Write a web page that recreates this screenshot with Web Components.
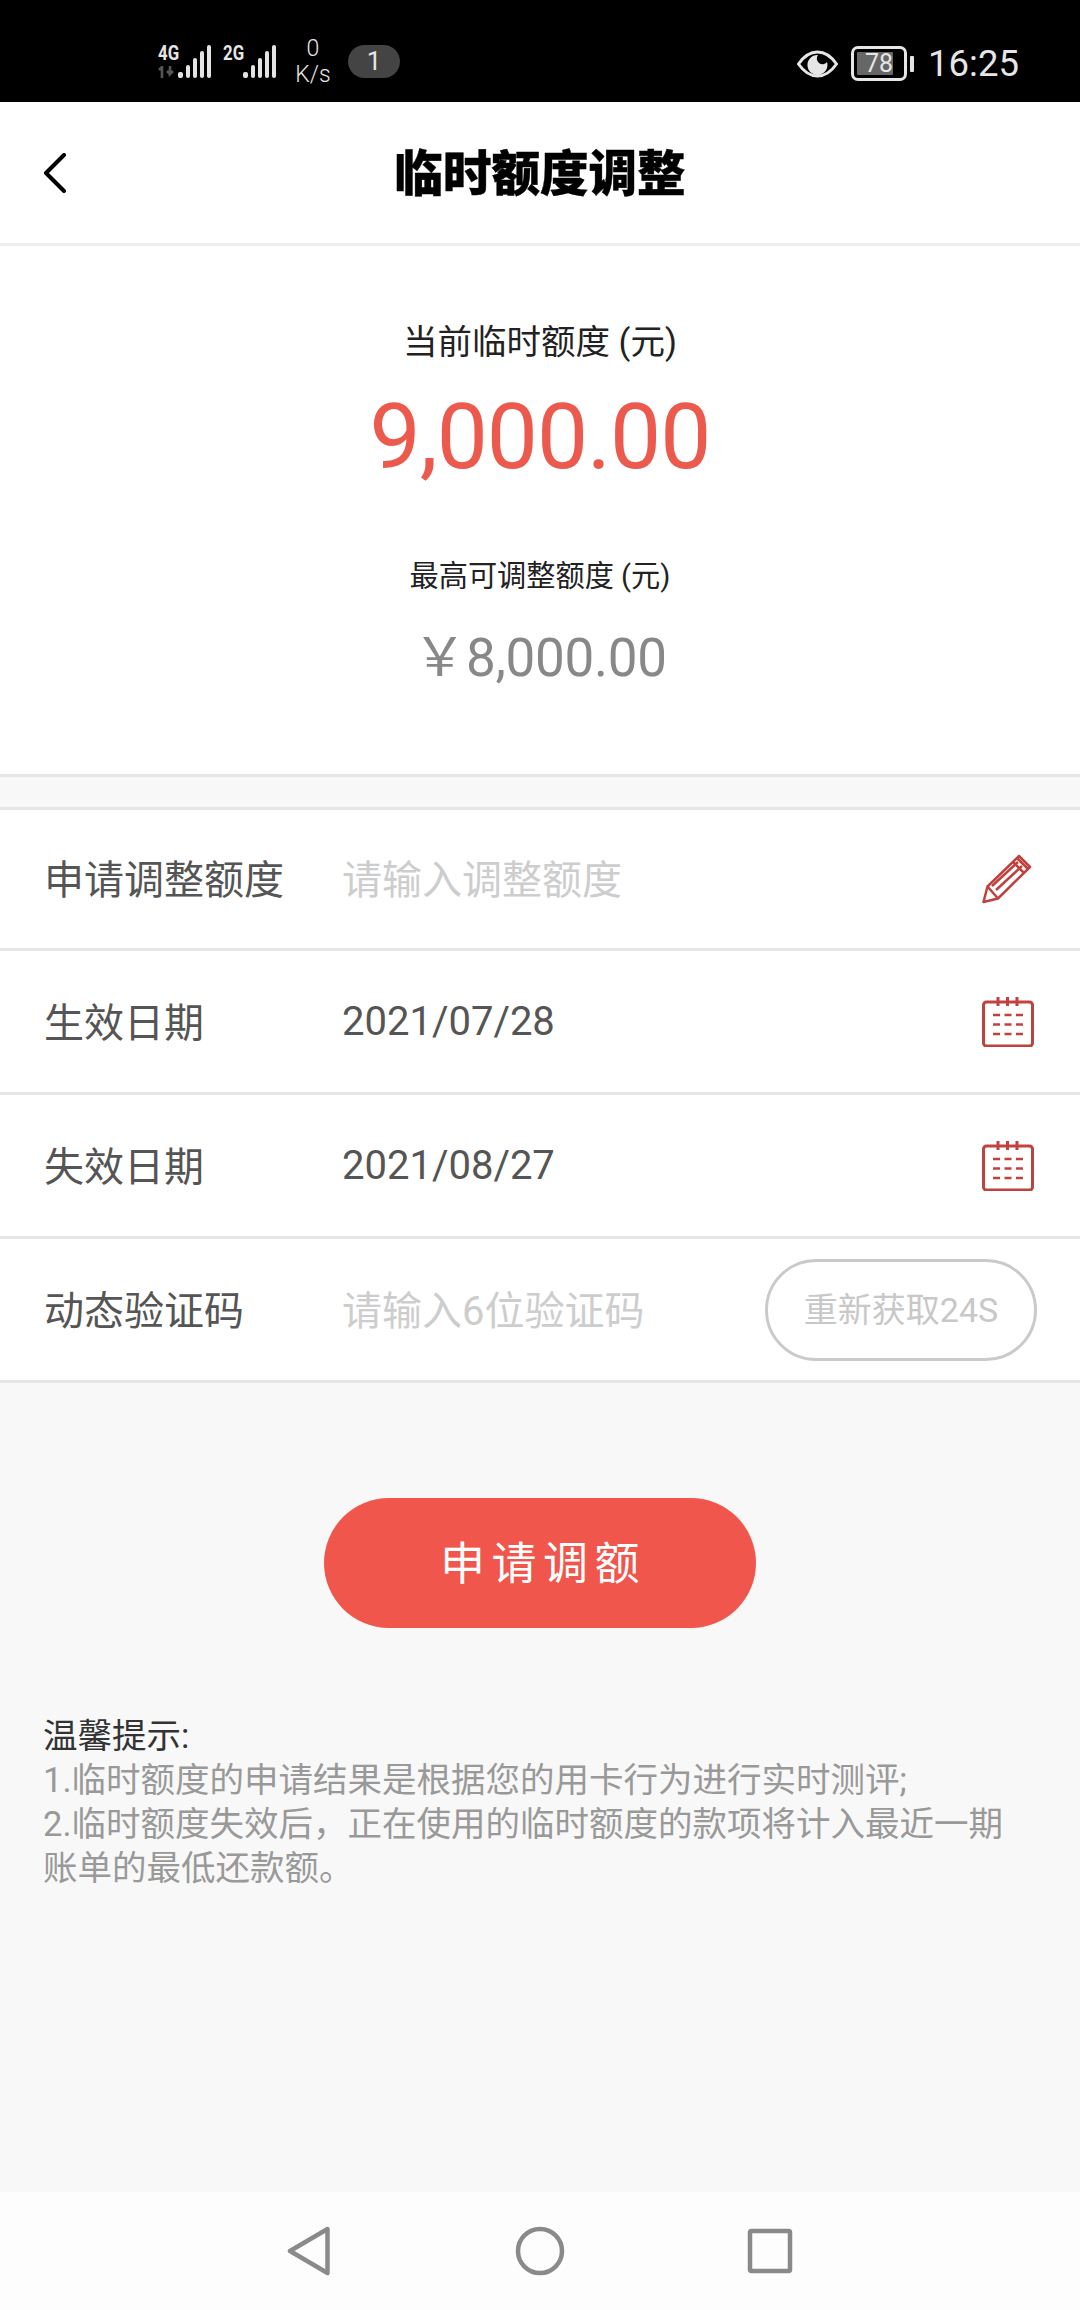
<!DOCTYPE html>
<html lang="zh">
<head>
<meta charset="utf-8">
<title>临时额度调整</title>
<style>
html, body { margin: 0; padding: 0; }
body {
    width: 1080px;
    height: 2310px;
    background: #f8f8f8;
    font-family: "Roboto", "Noto Sans CJK SC", sans-serif;
    display: flex;
    flex-direction: column;
}
.rows { margin-top: 30px; }
.pad { flex: 1; }
</style>
</head>
<body>
<status-bar></status-bar>
<app-header>临时额度调整</app-header>
<limit-summary></limit-summary>
<div class="rows">
    <form-row label="申请调整额度" value="请输入调整额度" placeholder first><edit-icon slot="end"></edit-icon></form-row>
    <form-row label="生效日期" value="2021/07/28"><date-icon slot="end"></date-icon></form-row>
    <form-row label="失效日期" value="2021/08/27"><date-icon slot="end"></date-icon></form-row>
    <form-row label="动态验证码" value="请输入6位验证码" placeholder><code-button slot="end">重新获取24S</code-button></form-row>
</div>
<submit-button>申请调额</submit-button>
<tip-note></tip-note>
<div class="pad"></div>
<sys-nav></sys-nav>

<script>
function tpl(html) {
    const t = document.createElement('template');
    t.innerHTML = html;
    return t;
}

// plain element: clones one template into an open shadow root
function define(name, template) {
    customElements.define(name, class extends HTMLElement {
        constructor() {
            super();
            this.attachShadow({mode: 'open'}).appendChild(template.content.cloneNode(true));
        }
    });
}

define('signal-bars', tpl(`
    <style>
    :host { display: flex; align-items: flex-end; gap: 3px; height: 33px; }
    i { display: block; width: 4px; background: #e4e4e4; border-radius: 2px; }
    </style>
    <i style="height:6px;width:5px"></i><i style="height:13px"></i><i style="height:20px"></i><i style="height:27px"></i><i style="height:33px"></i>
`));

define('status-bar', tpl(`
    <style>
    :host {
        display: flex;
        align-items: center;
        height: 102px;
        background: #000;
        color: #e6e6e6;
        font-family: "Roboto", sans-serif;
        box-sizing: border-box;
        padding: 18px 0 0 158px;
    }
    .sim { display: flex; align-items: flex-start; height: 33px; margin-top: 3px; }
    .net { position: relative; width: 20px; height: 33px; }
    .net span { display: block; font: 700 21px/17px "Roboto", sans-serif; transform: scaleX(.8); transform-origin: left top; }
    .net svg { position: absolute; left: 0; top: 21px; }
    .speed { width: 38px; margin-left: 18px; font-size: 23px; font-weight: 300; line-height: 26px; text-align: center; white-space: nowrap; margin-top: 3px; }
    .badge {
        margin-left: 16px;
        width: 52px;
        height: 33px;
        margin-top: 2px;
        border-radius: 17px;
        background: #444;
        font-size: 26px;
        line-height: 33px;
        text-align: center;
    }
    .right { margin-left: auto; display: flex; align-items: center; padding-right: 61px; margin-top: 7px; }
    .batt { position: relative; display: block; width: 56px; height: 35px; margin-left: 13px; box-sizing: border-box; border: 3px solid #e6e6e6; border-radius: 7px; }
    .batt b { position: absolute; left: 3px; top: 3px; bottom: 3px; width: 36px; background: #666; border-radius: 1px; }
    .batt span { position: absolute; left: 0; right: 0; top: 0; bottom: 0; text-align: center; font: 400 25px/29px "Roboto", sans-serif; }
    .tip { width: 4px; height: 16px; margin-left: 3px; background: #e6e6e6; border-radius: 1px; }
    .time { margin-left: 14px; font-size: 36.500px; font-weight: 400; line-height: 40px; }
    </style>
    <div class="sim">
        <div class="net"><span>4G</span><svg width="18" height="12" viewBox="0 0 18 12"><path d="M1 4 4 1V12M12 0V8L15 5M12 8 9 5" fill="none" stroke="#555" stroke-width="2.600"/></svg></div>
        <signal-bars></signal-bars>
    </div>
    <div class="sim" style="margin-left:12px">
        <div class="net"><span>2G</span></div>
        <signal-bars></signal-bars>
    </div>
    <div class="speed">0<br>K/s</div>
    <div class="badge">1</div>
    <div class="right">
        <svg width="41" height="28" viewBox="0 0 41 28">
            <path d="M1.500 14C7 6 13 2 20.500 2S34 6 39.500 14C34 22 28 26 20.500 26S7 22 1.500 14Z" fill="none" stroke="#e6e6e6" stroke-width="3"/>
            <path d="M20.500 5a10 10 0 1 0 9.500 7 5 5 0 0 1-9-7Z" fill="#e6e6e6"/>
        </svg>
        <div class="batt"><b></b><span>78</span></div>
        <div class="tip"></div>
        <div class="time">16:25</div>
    </div>
`));

define('app-header', tpl(`
    <style>
    :host {
        display: flex;
        position: relative;
        align-items: center;
        justify-content: center;
        height: 141px;
        background: #fff;
        border-bottom: 3px solid #eee;
        color: #000;
        font: 900 48.500px/60px "Noto Sans CJK SC", sans-serif;
        -webkit-text-stroke: .4px #000;
    }
    .t { margin-bottom: 6px; }
    svg { position: absolute; left: 43px; top: 51px; }
    </style>
    <svg width="24" height="40" viewBox="0 0 24 40"><path d="M21 2 3 20 21 38" fill="none" stroke="#000" stroke-width="4" stroke-linecap="round" stroke-linejoin="round"/></svg>
    <div class="t"><slot></slot></div>
`));

define('limit-summary', tpl(`
    <style>
    :host {
        display: flex;
        flex-direction: column;
        align-items: center;
        height: 531px;
        box-sizing: border-box;
        background: #fff;
        border-bottom: 3px solid #e6e6e6;
        font-family: "Roboto", "Noto Sans CJK SC", sans-serif;
        padding-top: 74px;
    }
    .cap1 { font-size: 34.500px; line-height: 44px; color: #222; }
    .now { font-size: 91px; line-height: 110px; letter-spacing: -1px; color: #ec5a4e; margin-top: 18px; }
    .cap2 { font-size: 29.200px; line-height: 40px; color: #222; margin-top: 64px; }
    .max { font-size: 53px; line-height: 62px; letter-spacing: -.3px; color: #888; margin-top: 31px; }
    </style>
    <div class="cap1">当前临时额度 (元)</div>
    <div class="now">9,000.00</div>
    <div class="cap2">最高可调整额度 (元)</div>
    <div class="max">￥8,000.00</div>
`));

const rowTemplate = tpl(`
    <style>
    :host {
        display: flex;
        align-items: center;
        height: 144px;
        box-sizing: border-box;
        background: #fff;
        border-bottom: 3px solid #e6e6e6;
        padding: 0 44px;
        font-family: "Roboto", "Noto Sans CJK SC", sans-serif;
        font-size: 40px;
        color: #555;
    }
    :host([first]) { border-top: 3px solid #e6e6e6; }
    .label { width: 298px; flex: none; margin-top: -4px; }
    :host([placeholder]) .value { color: #cdcdcd; margin-top: -4px; }
    .end { margin-left: auto; display: flex; }
    </style>
    <div class="label"></div>
    <div class="value"></div>
    <div class="end"><slot name="end"></slot></div>
`);

customElements.define('form-row', class extends HTMLElement {
    constructor() {
        super();
        this.attachShadow({mode: 'open'}).appendChild(rowTemplate.content.cloneNode(true));
    }
    connectedCallback() {
        this.shadowRoot.querySelector('.label').textContent = this.getAttribute('label');
        this.shadowRoot.querySelector('.value').textContent = this.getAttribute('value');
    }
});

define('edit-icon', tpl(`
    <style>:host { display: block; width: 50px; height: 50px; margin-right: 4px; }</style>
    <svg width="50" height="50" viewBox="0 0 50 50" fill="none" stroke="#c0423f" stroke-width="2.500" stroke-linejoin="round">
        <path d="M1.500 48 5.500 32.500 37 2 48 13 16 44.500Z"/>
        <path d="M5.500 32.500 16 44.500M31 8 42 19M35 4 46 15M10 32 36 8M14 36 40 12"/>
    </svg>
`));

define('date-icon', tpl(`
    <style>:host { display: block; width: 52px; height: 50px; margin-right: 2px; }</style>
    <svg width="52" height="50" viewBox="0 0 52 50" fill="none" stroke="#c0423f">
        <rect x="1.500" y="5" width="49" height="44" rx="3" stroke-width="3"/>
        <path d="M16 0V9M25.500 0V9M35 0V9" stroke-width="3"/>
        <path d="M11 18H41M11 27.500H41M11 37H41" stroke-width="2.600" stroke-dasharray="7 4.500"/>
    </svg>
`));

define('code-button', tpl(`
    <style>
    :host {
        display: block;
        width: 272px;
        height: 102px;
        box-sizing: border-box;
        margin-right: -1px;
        border: 3px solid #cacaca;
        border-radius: 51px;
        color: #c8c8c8;
        font-size: 34px;
        line-height: 96px;
        text-align: center;
        white-space: nowrap;
    }
    </style>
    <slot></slot>
`));

define('submit-button', tpl(`
    <style>
    :host {
        display: block;
        width: 432px;
        height: 130px;
        margin: 115px auto 0;
        border-radius: 65px;
        background: #f0564b;
        color: #fff;
        font: 400 45px/126px "Noto Sans CJK SC", sans-serif;
        letter-spacing: 6.500px;
        text-indent: 6px;
        text-align: center;
    }
    </style>
    <slot></slot>
`));

define('tip-note', tpl(`
    <style>
    :host {
        display: block;
        margin-top: 86px;
        padding: 0 44px 0 43px;
        font-family: "Roboto", "Noto Sans CJK SC", sans-serif;
        font-size: 34.500px;
        line-height: 44px;
        color: #999;
    }
    .head { color: #333; }
    </style>
    <div class="head">温馨提示:</div>
    <div>1.临时额度的申请结果是根据您的用卡行为进行实时测评;</div>
    <div>2.临时额度失效后，正在使用的临时额度的款项将计入最近一期账单的最低还款额。</div>
`));

define('sys-nav', tpl(`
    <style>
    :host {
        display: flex;
        align-items: center;
        height: 118px;
        box-sizing: border-box;
        padding-left: 287px;
        background: #fdfdfd;
    }
    svg { display: block; fill: none; stroke: #8a8a8a; stroke-width: 4.500; stroke-linejoin: round; }
    </style>
    <svg width="44" height="50" viewBox="0 0 44 50"><path d="M40.500 3 3 25 40.500 47Z"/></svg>
    <svg style="margin-left:184px" width="50" height="50" viewBox="0 0 50 50"><circle cx="25" cy="25" r="22"/></svg>
    <svg style="margin-left:182px" width="46" height="46" viewBox="0 0 46 46"><rect x="3" y="3" width="40" height="40" rx="1.500"/></svg>
`));
</script>
</body>
</html>
